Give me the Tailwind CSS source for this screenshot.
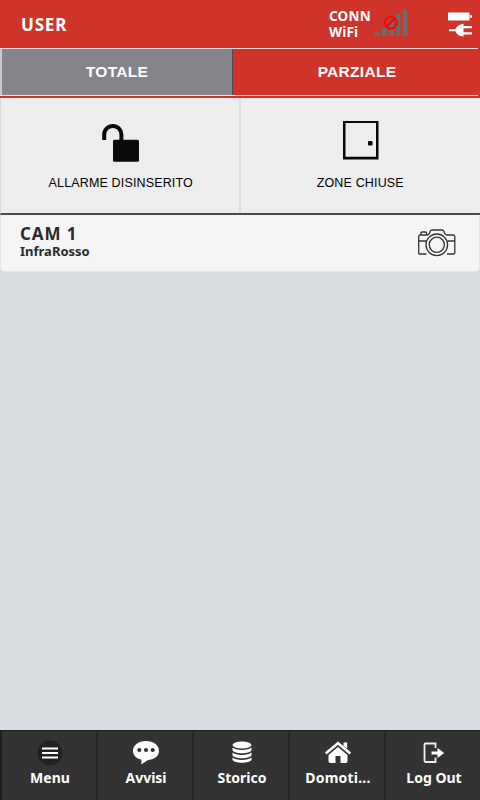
<!DOCTYPE html>
<html lang="it">
<head>
  <meta charset="UTF-8">
  <meta name="viewport" content="width=device-width, initial-scale=1.0">
  <title>Allarme</title>
  <script src="https://cdn.jsdelivr.net/npm/@tailwindcss/browser@4"></script>
</head>
<body class="w-[480px] h-[800px] overflow-hidden flex flex-col bg-[#d9dce1] font-['Noto_Sans','Open_Sans',sans-serif]">

  <!-- Header -->
  <header class="h-12 shrink-0 bg-[#d0332a] text-white flex items-center pl-[21px] pr-[7px]">
    <h1 class="text-[17px] font-bold tracking-[0.8px] leading-6 pt-0.5">USER</h1>
    <div class="ml-auto w-[46px] text-[13.5px] tracking-[0.2px] font-bold whitespace-nowrap">
      <p class="leading-4">CONN</p>
      <p class="leading-4">WiFi</p>
    </div>
    <!-- Signal -->
    <svg class="w-[34px] h-[30px] shrink-0" viewBox="0 0 34 30">
      <g fill="#6b6b68">
        <rect x="0" y="23" width="5" height="4"/>
        <rect x="7" y="19" width="5" height="8"/>
        <rect x="14" y="13" width="5" height="14"/>
        <rect x="21" y="5" width="4.500" height="22"/>
        <rect x="28" y="1" width="4.500" height="26"/>
      </g>
      <g fill="none" stroke="#f5060a" stroke-width="2">
        <circle cx="15.800" cy="13.700" r="6"/>
        <path d="M11.500 18 20 9.300"/>
      </g>
    </svg>
    <!-- Battery and plug -->
    <svg class="w-[27px] h-[28px] ml-[37px] shrink-0" viewBox="0 0 27 28" fill="#fff">
      <rect x="2" y="2.500" width="21.500" height="8" rx=".5"/>
      <rect x="24" y="5.300" width="2" height="2.400"/>
      <path d="M3 19.200h6.500c.8-2.500 2.700-4.200 5-4.800l3-.6V16H26v2.200h-8.500v4H26v2.200h-8.500v2.200l-3-.6c-2.300-.6-4.200-2.300-5-4.800H3z"/>
    </svg>
  </header>

  <!-- Tabs -->
  <nav class="h-[50px] shrink-0 bg-[#d0332a] pb-0.5 pr-0.5">
    <div class="h-12 flex border-y border-[#f0d9d8] text-white text-[15.5px] tracking-[0.3px] font-bold font-['Liberation_Sans',sans-serif]">
      <button class="w-[233px] bg-[#85848a] border-l-2 border-l-[#c9c9cd] border-r border-r-[#4e4d51]">TOTALE</button>
      <button class="flex-1 pl-[3px]">PARZIALE</button>
    </div>
  </nav>

  <!-- Status -->
  <section class="h-[117px] shrink-0 grid grid-cols-2 bg-[#ededed] border-b-2 border-[#4a4a4a] border-l border-l-[#dadada] text-[12.5px] text-black font-['Liberation_Sans',sans-serif]">
    <div class="flex flex-col items-center border-r-2 border-[#dfdfdf] pt-6">
      <svg class="w-10 h-10 ml-px" viewBox="0 0 40 40">
        <path d="M4.200 18v-5.500a8.600 8.600 0 0 1 17.200 0V19" fill="none" stroke="#0a0a0a" stroke-width="4"/>
        <rect x="13" y="17.700" width="26" height="22" rx="1.500" fill="#0a0a0a"/>
      </svg>
      <p class="mt-3 ml-0.5 leading-[18px] tracking-[0.15px]">ALLARME DISINSERITO</p>
    </div>
    <div class="flex flex-col items-center pt-[22px]">
      <svg class="w-9 h-10 ml-0.5" viewBox="0 0 36 40">
        <path d="M0 1h35.500v38.500H0zM2.500 3v33.700H33V3z" fill="#080808" fill-rule="evenodd"/>
        <rect x="25" y="21" width="4.500" height="4.500" rx=".8" fill="#080808"/>
      </svg>
      <p class="mt-3.5 leading-[18px] tracking-[0.15px]">ZONE CHIUSE</p>
    </div>
  </section>

  <!-- Camera -->
  <section class="h-[57px] shrink-0 flex justify-between bg-[#f5f5f5] border border-t-0 border-[#e3e4e7] rounded-b-[5px] pl-[19px] pr-[22px] text-[#2b2b2b] font-bold">
    <div class="pt-[9px]">
      <h2 class="text-[17px] tracking-[0.9px] leading-5">CAM 1</h2>
      <p class="text-[13px] leading-4 -mt-px">InfraRosso</p>
    </div>
    <svg class="w-[40px] h-[28px] mt-[14px]" viewBox="0 0 40 28" fill="none" stroke="#333" stroke-width="1.300">
      <path d="M9.500 25H3q-1.300 0-1.300-1.300V7.500Q1.700 6 3.200 6H10q2 0 2.600-2l.5-1.500Q13.600 1 15 1h10q1.500 0 2 1.500l.5 1.500q.7 2 2.600 2H36q1.800 0 1.800 1.500v16.200q0 1.300-1.300 1.300h-6.500"/>
      <path d="M3.800 6V4.300q0-1.300 1.300-1.300h3.200q1.300 0 1.300 1.300V6M1.700 12h7.500M30.300 12h7.500"/>
      <circle cx="19.800" cy="15.800" r="10.800"/>
      <circle cx="19.800" cy="15.800" r="7.600"/>
    </svg>
  </section>

  <!-- Bottom bar -->
  <footer class="mt-auto h-[70px] shrink-0 grid grid-cols-[repeat(5,96px)] bg-[#333] border-t border-[#202020] border-l-2 border-l-[#1f1f1f] text-white text-[14px] leading-[18px] font-bold whitespace-nowrap">
    <a class="flex flex-col items-center pt-[9px] shadow-[inset_-2px_0_#272727]">
      <svg class="w-[26px] h-[26px]" viewBox="0 0 26 26">
        <circle cx="13" cy="13" r="12.500" fill="#222"/>
        <path d="M5 8.500h16M5 13h16M5 17.500h16" stroke="#fff" stroke-width="2"/>
      </svg>
      <span class="mt-[3px]">Menu</span>
    </a>
    <a class="flex flex-col items-center pt-[9px] shadow-[inset_-2px_0_#272727]">
      <svg class="w-[28px] h-[26px]" viewBox="0 0 28 26">
        <path d="M14 1c7.200 0 13 4.200 13 9.700 0 5-4 8.500-10.500 9.200-2 .3-3.500 2.800-7.500 4.400.6-2 .5-3.500.2-4.800C4.200 18.500 1 15.300 1 10.700 1 5.200 6.800 1 14 1z" fill="#fff"/>
        <g fill="#333">
          <circle cx="7.300" cy="10" r="2.100"/>
          <circle cx="14" cy="10" r="2.100"/>
          <circle cx="20.700" cy="10" r="2.100"/>
        </g>
      </svg>
      <span class="mt-[3px]">Avvisi</span>
    </a>
    <a class="flex flex-col items-center pt-[9px] shadow-[inset_-2px_0_#272727]">
      <svg class="w-[22px] h-[26px]" viewBox="0 0 22 26" fill="#fff">
        <ellipse cx="11" cy="5" rx="9.500" ry="3.500"/>
        <path d="M1.500 7.500c3 3.200 16 3.200 19 0v2.700c-1.500 4-17.500 4-19 0z"/>
        <path d="M1.500 12.500c3 3.200 16 3.200 19 0v2.700c-1.500 4-17.500 4-19 0z"/>
        <path d="M1.500 17.500c3 3.200 16 3.200 19 0v2.300c-1.500 4-17.500 4-19 0z"/>
      </svg>
      <span class="mt-[3px]">Storico</span>
    </a>
    <a class="flex flex-col items-center pt-[9px] shadow-[inset_-2px_0_#272727]">
      <svg class="w-[28px] h-[26px]" viewBox="0 0 28 26">
        <path d="M1.700 13.500 14 3.200l12.300 10.300" fill="none" stroke="#fff" stroke-width="2.500"/>
        <path d="M19.500 2.500h3.700v6.300l-3.700-3zM14 7l9.500 8v6.200q0 1.800-1.800 1.800h-5.200v-7h-5v7H6.300q-1.800 0-1.800-1.800V15z" fill="#fff"/>
      </svg>
      <span class="mt-[3px] tracking-[0.2px]">Domoti...</span>
    </a>
    <a class="flex flex-col items-center pt-[9px]">
      <svg class="w-[22px] h-[26px]" viewBox="0 0 22 26">
        <path d="M12.500 8V3.500h-10q-1 0-1 1v16q0 1.500 1 1.500h10v-4.500" fill="none" stroke="#eee" stroke-width="1.800"/>
        <path d="M8.500 11.500h6V8l6.700 5-6.700 5v-3.500h-6z" fill="#fff"/>
      </svg>
      <span class="mt-[3px]">Log Out</span>
    </a>
  </footer>

</body>
</html>
